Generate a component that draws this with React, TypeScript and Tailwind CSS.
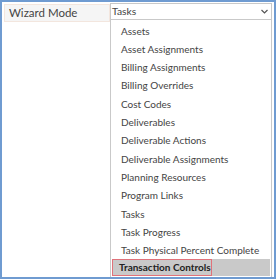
import React from 'react';

const items = [
  'Assets',
  'Asset Assignments',
  'Billing Assignments',
  'Billing Overrides',
  'Cost Codes',
  'Deliverables',
  'Deliverable Actions',
  'Deliverable Assignments',
  'Planning Resources',
  'Program Links',
  'Tasks',
  'Task Progress',
  'Task Physical Percent Complete',
];

const App = () => {
  return (
    <div className="w-[276px] h-[279px] bg-white border-2 border-[#6f9bd1] font-['Lato',sans-serif] text-[10px] text-[#444] flex overflow-hidden whitespace-nowrap">
      <div className="w-[108px] flex flex-col">
        <div className="h-[18px] mt-[2px] ml-[2px] bg-[#f5f5f5] border border-[#f3e6de] flex items-center pl-[4px] text-[11.5px]">
          Wizard Mode
        </div>
      </div>
      <div className="flex-1 flex flex-col mr-[2px]">
        <div className="h-[18px] mt-[1px] border border-[#c9c9c9] flex items-center justify-between pl-[1px] pr-[3px] text-[10.3px]">
          <span>Tasks</span>
          <svg width="7" height="5" viewBox="0 0 7 5" className="text-[#555]">
            <path d="M0.5 1 L3.5 4 L6.5 1" fill="none" stroke="currentColor" strokeWidth="1.2" />
          </svg>
        </div>
        <div className="flex-1 border border-t-0 border-[#c9c9c9] flex flex-col pt-[1px] pb-[1px] px-[1px]">
          <div className="flex-1 flex flex-col justify-around">
            {items.map((it) => (
              <div key={it} className="h-[18.3px] flex items-center pl-[9px] leading-none">
                {it}
              </div>
            ))}
          </div>
          <div className="h-[17px] bg-[#c9c9c9] flex">
            <div className="h-full border border-[#e0727a] flex items-center pl-[6px] w-[100px] text-[#222] font-bold">
              Transaction Controls
            </div>
          </div>
        </div>
      </div>
    </div>
  );
};

export default App;
